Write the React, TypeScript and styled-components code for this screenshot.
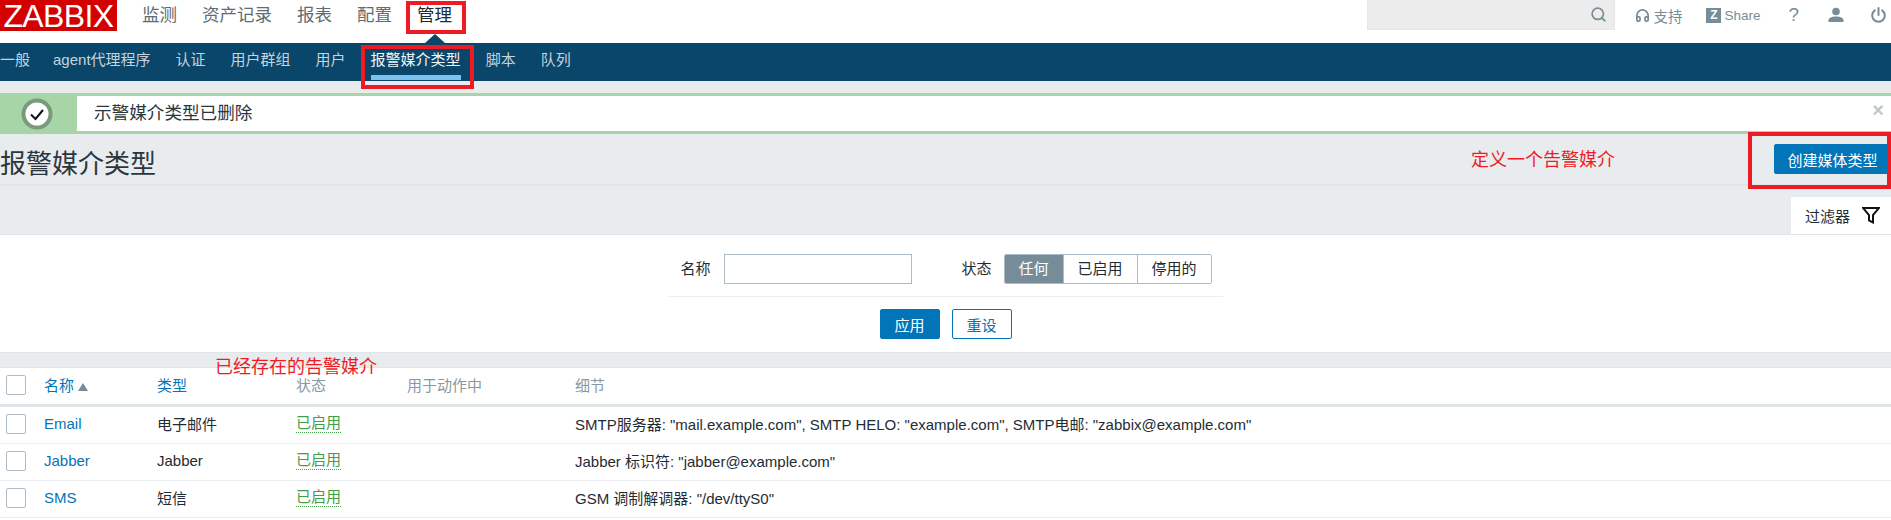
import React from 'react';
import styled, { createGlobalStyle } from 'styled-components';
import { Search, Headphones } from 'lucide-react';

const Global = createGlobalStyle`
  html, body { margin: 0; padding: 0; background: #fff; }
  body {
    font-family: "Liberation Sans", "Noto Sans CJK SC", sans-serif;
    font-size: 15px;
    color: #1f2c33;
    overflow: hidden;
  }
`;

const Page = styled.div`
  position: relative;
  width: 1891px;
  height: 520px;
  overflow: hidden;
  background: #e9ecef;
`;

const TopBar = styled.header`
  height: 43px;
  background: #fff;
  display: flex;
  align-items: flex-start;
`;

const Logo = styled.div`
  width: 117px;
  height: 31px;
  box-sizing: border-box;
  padding-top: 1px;
  background: #d40000;
  color: #fff;
  font-size: 32px;
  line-height: 30px;
  text-align: center;
  letter-spacing: -0.6px;
`;

const MainNav = styled.nav`
  display: flex;
  gap: 25px;
  margin-left: 25px;
`;

const MainLink = styled.a<{ $active?: boolean }>`
  font-size: 17.5px;
  line-height: 30px;
  color: ${p => (p.$active ? '#1f2c33' : '#5e6c74')};
`;

const Tools = styled.div`
  margin-left: auto;
  display: flex;
  align-items: center;
  height: 30px;
  color: #768d99;
`;

const SearchBox = styled.div`
  width: 248px;
  height: 30px;
  box-sizing: border-box;
  background: #ececec;
  border: 1px solid #e6e6e6;
  border-top: 0;
  display: flex;
  align-items: center;
  justify-content: flex-end;
  padding-right: 7px;
  margin-right: 20px;
`;

const ToolLink = styled.a<{ $gap: number; $size?: number }>`
  display: flex;
  align-items: center;
  gap: 3px;
  font-size: ${p => p.$size ?? 14.5}px;
  margin-right: ${p => p.$gap}px;
`;

const ZBox = styled.span`
  width: 15px;
  height: 15px;
  background: #768d99;
  color: #fff;
  font-size: 12px;
  font-weight: bold;
  line-height: 15px;
  text-align: center;
`;

const Caret = styled.div`
  position: absolute;
  left: 425px;
  top: 34px;
  border-left: 10px solid transparent;
  border-right: 10px solid transparent;
  border-bottom: 9px solid #0a466a;
`;

const SubBar = styled.nav`
  height: 38px;
  background: #0a466a;
  display: flex;
  gap: 25px;
`;

const SubLink = styled.a<{ $active?: boolean }>`
  height: 37px;
  box-sizing: border-box;
  font-size: 15px;
  line-height: 33px;
  color: ${p => (p.$active ? '#f2f7fa' : '#c3d4de')};
  border-bottom: ${p => (p.$active ? '5px solid #7cc1f0' : '0')};
  &:first-child { margin-right: -2px; }
`;

const Message = styled.div`
  margin-top: 12px;
  height: 41px;
  background: #a8d5a8;
  padding: 3px 0;
  box-sizing: border-box;
  display: flex;
  position: relative;
`;

const MessageIcon = styled.div`
  width: 77px;
  box-sizing: border-box;
  padding-right: 3px;
  display: flex;
  align-items: center;
  justify-content: center;
`;

const MessageBody = styled.div`
  flex: 1;
  background: #fff;
  padding-left: 17px;
  font-size: 17.6px;
  line-height: 35px;
  color: #2b373d;
`;

const CloseMark = styled.span`
  position: absolute;
  right: 7px;
  top: 8px;
  color: #bcc8ce;
  font-size: 20px;
  font-weight: bold;
  line-height: 18px;
`;

const PageHeader = styled.div`
  height: 50px;
  border-bottom: 2px solid #e1e5e9;
  display: flex;
  align-items: center;
  justify-content: space-between;
`;

const Title = styled.h1`
  margin: 4px 0 0;
  font-size: 26px;
  font-weight: normal;
  color: #2b373d;
`;

const Button = styled.button<{ $outline?: boolean }>`
  height: 30px;
  box-sizing: border-box;
  padding: 0;
  font: inherit;
  font-size: 15px;
  border-radius: 2px;
  border: 1px solid #0275b8;
  background: ${p => (p.$outline ? '#fff' : '#0275b8')};
  color: ${p => (p.$outline ? '#0275b8' : '#fff')};
`;

const CreateButton = styled(Button)`
  width: 117px;
`;

const FilterStrip = styled.div`
  height: 48px;
  display: flex;
  justify-content: flex-end;
  align-items: flex-end;
`;

const FilterTab = styled.div`
  width: 100px;
  height: 37px;
  box-sizing: border-box;
  background: #fff;
  padding-left: 14px;
  display: flex;
  align-items: center;
  gap: 12px;
  color: #1f2c33;
`;

const FilterPanel = styled.section`
  height: 119px;
  box-sizing: border-box;
  background: #fff;
  border-top: 1px solid #dfe4e7;
  border-bottom: 1px solid #dfe4e7;
  padding-top: 19px;
  display: flex;
  flex-direction: column;
  align-items: center;
`;

const FilterRow = styled.div`
  width: 554px;
  height: 43px;
  box-sizing: border-box;
  border-bottom: 1px solid #ebeef0;
  padding-left: 12px;
  display: flex;
  align-items: flex-start;
`;

const FieldLabel = styled.label<{ $gap: number }>`
  line-height: 30px;
  margin-right: ${p => p.$gap}px;
`;

const NameInput = styled.div`
  width: 188px;
  height: 30px;
  box-sizing: border-box;
  border: 1px solid #acbbc4;
  margin-right: 50px;
`;

const Segments = styled.div`
  display: flex;
  height: 30px;
  box-sizing: border-box;
  border: 1px solid #acbbc4;
  border-radius: 2px;
  overflow: hidden;
`;

const Segment = styled.span<{ $active?: boolean; $w: number }>`
  width: ${p => p.$w}px;
  text-align: center;
  line-height: 28px;
  background: ${p => (p.$active ? '#768d99' : '#fff')};
  color: ${p => (p.$active ? '#fff' : '#1f2c33')};
  & + & { border-left: 1px solid #acbbc4; }
`;

const FilterActions = styled.div`
  display: flex;
  gap: 12px;
  margin-top: 12px;
`;

const ActionButton = styled(Button)`
  width: 60px;
`;

const Table = styled.section`
  margin-top: 14px;
  background: #fff;
  border-top: 1px solid #dfe4e7;
  height: 153px;
`;

const Row = styled.div<{ $head?: boolean }>`
  display: grid;
  grid-template-columns: 44px 113px 139px 111px 168px 1fr;
  align-items: center;
  box-sizing: border-box;
  height: ${p => (p.$head ? '39px' : '37px')};
  border-bottom: ${p => (p.$head ? '3px solid #dfe4e7' : '1px solid #ebeef0')};
`;

const Check = styled.span`
  display: block;
  width: 20px;
  height: 20px;
  margin: 0 0 3px 6px;
  box-sizing: border-box;
  border: 1px solid #acbbc4;
  border-radius: 2px;
  background: #fff;
`;

const Cell = styled.span`
  padding-bottom: 4px;
`;

const HeadCell = styled(Cell)<{ $link?: boolean }>`
  color: ${p => (p.$link ? '#0275b8' : '#8a989f')};
`;

const SortArrow = styled.span`
  display: inline-block;
  margin-left: 4px;
  border-left: 5px solid transparent;
  border-right: 5px solid transparent;
  border-bottom: 8px solid #768d99;
`;

const NameLink = styled(Cell)`
  color: #0275b8;
`;

const Enabled = styled.span`
  justify-self: start;
  margin-bottom: 4px;
  color: #429e47;
  border-bottom: 1px dotted #429e47;
  line-height: 19px;
`;

const RedBox = styled.div<{ $x: number; $y: number; $w: number; $h: number }>`
  position: absolute;
  left: ${p => p.$x}px;
  top: ${p => p.$y}px;
  width: ${p => p.$w}px;
  height: ${p => p.$h}px;
  box-sizing: border-box;
  border: 4px solid #ed1c24;
`;

const Note = styled.span<{ $x: number; $y: number }>`
  position: absolute;
  left: ${p => p.$x}px;
  top: ${p => p.$y}px;
  color: #ed1c24;
  font-size: 18px;
  line-height: 24px;
  white-space: nowrap;
`;

const rows = [
  { name: 'Email', type: '电子邮件', detail: 'SMTP服务器: "mail.example.com", SMTP HELO: "example.com", SMTP电邮: "zabbix@example.com"' },
  { name: 'Jabber', type: 'Jabber', detail: 'Jabber 标识符: "jabber@example.com"' },
  { name: 'SMS', type: '短信', detail: 'GSM 调制解调器: "/dev/ttyS0"' },
];

const App: React.FC = () => (
  <Page>
    <Global />
    <TopBar>
      <Logo>ZABBIX</Logo>
      <MainNav>
        <MainLink>监测</MainLink>
        <MainLink>资产记录</MainLink>
        <MainLink>报表</MainLink>
        <MainLink>配置</MainLink>
        <MainLink $active>管理</MainLink>
      </MainNav>
      <Tools>
        <SearchBox><Search size={17} strokeWidth={2.4} /></SearchBox>
        <ToolLink $gap={24}><Headphones size={15} strokeWidth={2.8} />支持</ToolLink>
        <ToolLink $gap={28} $size={13.5}><ZBox>Z</ZBox>Share</ToolLink>
        <ToolLink $gap={29} $size={19}>?</ToolLink>
        <ToolLink $gap={27}>
          <svg width="16" height="16" viewBox="0 0 16 16" fill="currentColor">
            <circle cx="8" cy="4.5" r="3.8" />
            <path d="M0.5 15v-1.6C0.5 10.8 4 9.6 8 9.6s7.5 1.2 7.5 3.8V15z" />
          </svg>
        </ToolLink>
        <ToolLink $gap={5}>
          <svg width="15" height="16" viewBox="0 0 15 16" fill="none" stroke="currentColor" strokeWidth="2" strokeLinecap="round">
            <path d="M7.5 1v7" />
            <path d="M3.8 3.4a6.3 6.3 0 1 0 7.4 0" />
          </svg>
        </ToolLink>
      </Tools>
    </TopBar>
    <Caret />
    <SubBar>
      <SubLink>一般</SubLink>
      <SubLink>agent代理程序</SubLink>
      <SubLink>认证</SubLink>
      <SubLink>用户群组</SubLink>
      <SubLink>用户</SubLink>
      <SubLink $active>报警媒介类型</SubLink>
      <SubLink>脚本</SubLink>
      <SubLink>队列</SubLink>
    </SubBar>
    <Message>
      <MessageIcon>
        <svg width="32" height="32" viewBox="0 0 32 32">
          <circle cx="16" cy="16" r="13.5" fill="#fff" stroke="#7a9a7c" strokeWidth="4" />
          <path d="M10 16.5l4.5 4.5 7.5-9" fill="none" stroke="#111" strokeWidth="2" />
        </svg>
      </MessageIcon>
      <MessageBody>示警媒介类型已删除</MessageBody>
      <CloseMark>×</CloseMark>
    </Message>
    <PageHeader>
      <Title>报警媒介类型</Title>
      <CreateButton>创建媒体类型</CreateButton>
    </PageHeader>
    <FilterStrip>
      <FilterTab>
        过滤器
        <svg width="18" height="17" viewBox="0 0 18 17" fill="none" stroke="#111" strokeWidth="2">
          <path d="M1 1h16l-6 7v7.5l-4-2V8z" />
        </svg>
      </FilterTab>
    </FilterStrip>
    <FilterPanel>
      <FilterRow>
        <FieldLabel $gap={13}>名称</FieldLabel>
        <NameInput />
        <FieldLabel $gap={12}>状态</FieldLabel>
        <Segments>
          <Segment $active $w={58}>任何</Segment>
          <Segment $w={73}>已启用</Segment>
          <Segment $w={73}>停用的</Segment>
        </Segments>
      </FilterRow>
      <FilterActions>
        <ActionButton>应用</ActionButton>
        <ActionButton $outline>重设</ActionButton>
      </FilterActions>
    </FilterPanel>
    <Table>
      <Row $head>
        <Check />
        <HeadCell $link>名称<SortArrow /></HeadCell>
        <HeadCell $link>类型</HeadCell>
        <HeadCell>状态</HeadCell>
        <HeadCell>用于动作中</HeadCell>
        <HeadCell>细节</HeadCell>
      </Row>
      {rows.map(r => (
        <Row key={r.name}>
          <Check />
          <NameLink>{r.name}</NameLink>
          <Cell>{r.type}</Cell>
          <Enabled>已启用</Enabled>
          <Cell />
          <Cell>{r.detail}</Cell>
        </Row>
      ))}
    </Table>
    <RedBox $x={406} $y={1} $w={60} $h={33} />
    <RedBox $x={361} $y={45} $w={113} $h={44} />
    <RedBox $x={1748} $y={132} $w={143} $h={57} />
    <Note $x={1471} $y={148}>定义一个告警媒介</Note>
    <Note $x={215} $y={355}>已经存在的告警媒介</Note>
  </Page>
);

export default App;
